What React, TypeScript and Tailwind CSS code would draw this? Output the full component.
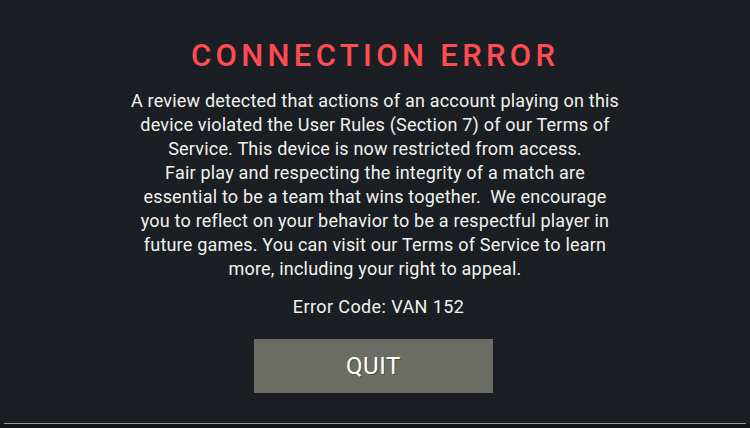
export default function App() {
  const lines = [
    'A review detected that actions of an account playing on this',
    'device violated the User Rules (Section 7) of our Terms of',
    'Service. This device is now restricted from access.',
    'Fair play and respecting the integrity of a match are',
    'essential to be a team that wins together.\u00a0 We encourage',
    'you to reflect on your behavior to be a respectful player in',
    'future games. You can visit our Terms of Service to learn',
    'more, including your right to appeal.',
  ];

  return (
    <div className="w-[750px] h-[428px] bg-[#1b1f23] flex flex-col overflow-hidden font-['Roboto',sans-serif]">
      <div className="flex-1 flex flex-col items-center">
        <h1 className="mt-[37px] mr-[4px] text-[31px] leading-[38px] font-medium tracking-[0.14em] pl-[0.14em] text-[#ff4b52]">
          CONNECTION ERROR
        </h1>
        <p className="mt-[14px] text-center text-[18px] leading-[24px] tracking-[0.2px] text-[#f2f2ee]">
          {lines.map((l, i) => (
            <span key={i} className="block whitespace-pre">
              {l}
            </span>
          ))}
        </p>
        <p className="mt-[16px] ml-[7px] text-[18px] leading-[20px] tracking-[0.4px] text-[#f2f2ee]">Error Code: VAN 152</p>
        <button className="mt-[22px] mr-[3px] w-[239px] h-[54px] bg-[#6b6d64] text-white text-[24px] tracking-wide flex items-center justify-center [text-shadow:1px_1px_0_rgba(0,0,0,0.35)]">
          QUIT
        </button>
      </div>
      <div className="h-[1px] mx-[4px] bg-[#9a9a9a]" />
      <div className="h-[4px] bg-[#111315]" />
    </div>
  );
}
